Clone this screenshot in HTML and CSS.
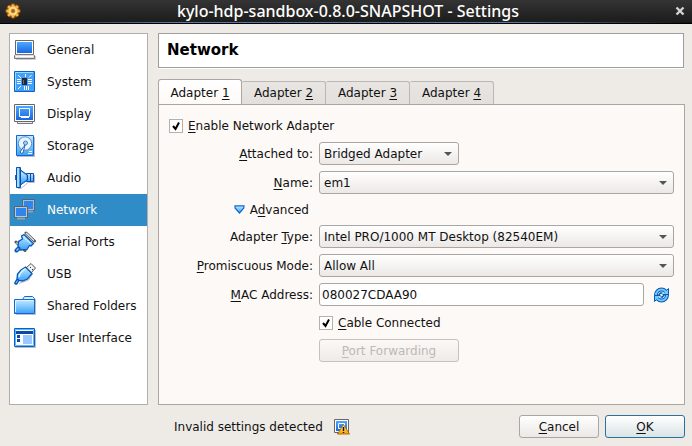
FILE: index.html
```html
<!DOCTYPE html>
<html lang="en">
<head>
<meta charset="utf-8">
<title>kylo-hdp-sandbox-0.8.0-SNAPSHOT - Settings</title>
<link rel="stylesheet" href="styles.css">
</head>
<body>
<svg class="defs" aria-hidden="true">
  <defs>
    <linearGradient id="blue" x1="0" y1="0" x2="0" y2="1"><stop offset="0" stop-color="#4aa9ff"/><stop offset="1" stop-color="#1a66e0"/></linearGradient>
    <linearGradient id="sky" x1="0" y1="0" x2="0" y2="1"><stop offset="0" stop-color="#c4ebff"/><stop offset="1" stop-color="#3ba2fb"/></linearGradient>
    <linearGradient id="gold" x1="0" y1="0" x2="0" y2="1"><stop offset="0" stop-color="#fff0a0"/><stop offset="1" stop-color="#f0a000"/></linearGradient>
  </defs>
</svg>
<header class="titlebar">
  <svg class="gear" width="16" height="16" viewBox="0 0 16 16" aria-hidden="true">
    <path d="M6.500 1h3l.5 2 2-1.200 2 2L12.800 6l2.200.5v3l-2.200.5 1.200 2-2 2-2-1.200-.5 2.200h-3L6 12.800 4 14l-2-2 1.200-2L1 9.500v-3L3.200 6 2 4l2-2 2 1.200z" fill="#f5b84a" stroke="#a35d08"/>
    <circle cx="8" cy="8" r="4" fill="#ffdf9a"/>
    <circle cx="8" cy="8" r="2" fill="#8c6222" stroke="#d88a18"/>
  </svg>
  <h1>kylo-hdp-sandbox-0.8.0-SNAPSHOT - Settings</h1>
  <button class="close" type="button" aria-label="Close">
    <svg width="10" height="10" viewBox="0 0 10 10"><path d="M1.500 1.500l7 7M8.500 1.500l-7 7" stroke="#d4d4d4" stroke-width="2.400"/></svg>
  </button>
</header>
<div class="content">
  <nav class="sidebar">
    <a href="#general"><svg viewBox="0 0 22 22" aria-hidden="true"><path d="M2 20.500h19.500V17" fill="none" stroke="#ccc"/><path d="M1.500 1.500h18v14h-18z" fill="#fff" stroke="#666"/><path d="M3 3h15v11H3z" fill="url(#blue)"/><path d="M1.500 15.500h18l1 1v3H.5v-3z" fill="#ddd" stroke="#777"/><path d="M2 17.500h2M5 17.500h14" stroke="#fff"/></svg>General</a>
    <a href="#system"><svg viewBox="0 0 22 22" aria-hidden="true"><path d="M.5.5h20v20H.5z" fill="#43a0f8" stroke="#0b62c4"/><path d="M1.500 19V1.500H19" fill="none" stroke="#9bddff"/><path d="M11.500 3v3M15 6.500L17.500 4M14 8.500h4M14 10.500h4M14 12.500h4M3 8.500h4M3 10.500h4M3 12.500h4M4 18l3-3M10.500 15v4M12.500 15v4M14.500 15v4M4 4l3 3" stroke="#fff"/><path d="M8 7h5v7H8z" fill="#252a35"/><path d="M9 9h1v4H9z" fill="#667"/></svg>System</a>
    <a href="#display"><svg viewBox="0 0 22 22" aria-hidden="true"><path d="M3.500 18.500h15v2h-15z" fill="#eee" stroke="#777"/><path d="M.5 1.500h20v17H.5z" fill="#fff" stroke="#666"/><path d="M2 3h17v14H2z" fill="url(#blue)"/><path d="M5.500 5.500h10v8h-10z" fill="none" stroke="#fff"/><path d="M7 14.500h8" stroke="#fff"/></svg>Display</a>
    <a href="#storage"><svg viewBox="0 0 22 22" aria-hidden="true"><path d="M3 21.500h17.500V2" fill="none" stroke="#bbc"/><path d="M2.500.5h17v20h-17z" fill="url(#sky)" stroke="#1268cf"/><circle cx="11" cy="8.500" r="6.700" fill="#eaf6ff" stroke="#5a8fcb"/><circle cx="11.500" cy="8" r="2" fill="#9ad0ff" stroke="#447ebd"/><path d="M11 10l-5 7q1 2 3 1z" fill="#fff" stroke="#2867aa"/><path d="M14 18.500h4M15 16.500h3" stroke="#fff"/></svg>Storage</a>
    <a href="#audio"><svg viewBox="0 0 22 22" aria-hidden="true"><path d="M4 21.500h3l7-6h6.500V8" fill="none" stroke="#bbc"/><path d="M12.500 6.500h7v8h-7z" fill="url(#sky)" stroke="#0b4ea8"/><path d="M16.500 7v7" stroke="#0b4ea8"/><path d="M2.500.5h4V3l7 5v5l-7 5v2.500h-4z" fill="#3a93ee" stroke="#0b4ea8"/><path d="M3 1h2v19H3z" fill="#a8dcff"/><path d="M7 4.500l5.500 4v4l-5.500 4z" fill="url(#sky)"/><path d="M6.500 2v17" stroke="#0b4ea8"/><path d="M1.500 8v5" stroke="#1268cf"/></svg>Audio</a>
    <a href="#network" class="selected" aria-current="page"><svg viewBox="0 0 22 22" aria-hidden="true"><path d="M8.500.5h12v11h-12z" fill="#a8bcd0" stroke="#50657a"/><path d="M10 2h9v8h-9z" fill="#2f86ea"/><path d="M12 12.500h7" stroke="#91a2b1" stroke-width="2"/><path d="M.5 7.500h13v11H.5z" fill="#b8c8d8" stroke="#50657a"/><path d="M2 9h10v8H2z" fill="#2f86ea"/><path d="M3 19.500h8" stroke="#91a2b1" stroke-width="2"/></svg>Network</a>
    <a href="#serial"><svg viewBox="0 0 22 22" aria-hidden="true"><path d="M12 2L20.500 10M2 11L11 19.500" stroke="#555" stroke-width="3" stroke-linecap="round"/><path d="M12 2L20 9.500M2.500 11.500l8 7.500" stroke="#e8e8e8" stroke-width="1.300"/><path d="M7.500 5L10 3.500l9.500 9L17 15l-1.500-.5-2.500 4-7 .5-2-2 .5-6.500L8.500 8z" fill="url(#sky)" stroke="#0b57b5" stroke-width="1.300"/><path d="M4.500 17.500l-2 2" stroke="#0b57b5" stroke-width="4" stroke-linecap="round"/><path d="M4.500 17.500l-2 2" stroke="#8bd0ff" stroke-width="1.500"/><path d="M9.500 6l7 6.500" stroke="#e1f6ff"/></svg>Serial Ports</a>
    <a href="#usb"><svg viewBox="0 0 22 22" aria-hidden="true"><path d="M12 5L17 .5l4.500 4.500L17 10z" fill="#f1f1f1" stroke="#555"/><path d="M16 4h1v1h-1zM18 6h1v1h-1z" fill="#333"/><path d="M5 20.500l9.500-3.500 4-6" fill="none" stroke="#bbc"/><path d="M11.500 4l6.500 6.500-4.500 5.500-5 2-4-.5-1.500-1.500.5-5L7 7z" fill="url(#sky)" stroke="#0b57b5" stroke-width="1.300"/><path d="M3.500 17.500L2 20" stroke="#0b57b5" stroke-width="3.500" stroke-linecap="round"/><path d="M3.500 17.500L2 20" stroke="#8bd0ff"/><path d="M5 14q1-5 6-8" fill="none" stroke="#dbf4ff" stroke-width="1.500"/></svg>USB</a>
    <a href="#folders"><svg viewBox="0 0 22 22" aria-hidden="true"><path d="M2 19.500h19.500V4" fill="none" stroke="#bbc"/><path d="M8.500 4.500l2-3h8l2 2v3h-12z" fill="#d9f1ff" stroke="#1268cf"/><path d="M.5 4.500h20v14H.5z" fill="url(#sky)" stroke="#1268cf"/><path d="M1.500 17V5.500H19" fill="none" stroke="#ddf5ff"/></svg>Shared Folders</a>
    <a href="#interface"><svg viewBox="0 0 22 22" aria-hidden="true"><path d="M1 20.500h20.500V3" fill="none" stroke="#bbc"/><path d="M.5 1.500h20v18H.5z" fill="#fff" stroke="#0b62c4"/><path d="M1.500 2.500h18v16h-18z" fill="#fff" stroke="#58b8ff"/><path d="M2 4h17v3H2zM3 8h3v3H3zM3 12h3v3H3z" fill="#0b49a8"/><path d="M9 8h9v9H9z" fill="#9cc8ff"/></svg>User Interface</a>
  </nav>
  <main>
    <h2>Network</h2>
    <div class="tabs" role="tablist">
      <button type="button" role="tab" aria-selected="true">Adapter <u>1</u></button>
      <button type="button" role="tab" aria-selected="false">Adapter <u>2</u></button>
      <button type="button" role="tab" aria-selected="false">Adapter <u>3</u></button>
      <button type="button" role="tab" aria-selected="false">Adapter <u>4</u></button>
    </div>
    <form class="panel" id="adapter">
      <label class="check"><input type="checkbox" checked><svg viewBox="0 0 14 14" aria-hidden="true"><path d="M4 7l2.500 3L10 3.500" fill="none" stroke="#000" stroke-width="2"/></svg><span><u>E</u>nable Network Adapter</span></label>
      <div class="fields">
        <label for="attached"><u>A</u>ttached to:</label>
        <div class="select short"><select id="attached"><option>Bridged Adapter</option></select></div>
        <label for="name"><u>N</u>ame:</label>
        <div class="select"><select id="name"><option>em1</option></select></div>
        <button class="advanced" type="button" aria-expanded="true"><svg width="11" height="9" viewBox="0 0 11 9" aria-hidden="true"><path d="M1 .8h9L9.800 3 5.500 8 1 3z" fill="url(#sky)" stroke="#1268cf" stroke-width="1.200"/></svg><span>A<u>d</u>vanced</span></button>
        <label for="type">Adapter <u>T</u>ype:</label>
        <div class="select"><select id="type"><option>Intel PRO/1000 MT Desktop (82540EM)</option></select></div>
        <label for="mode"><u>P</u>romiscuous Mode:</label>
        <div class="select"><select id="mode"><option>Allow All</option></select></div>
        <label for="mac"><u>M</u>AC Address:</label>
        <div class="mac"><input id="mac" type="text" value="080027CDAA90"><button type="button" aria-label="Generate new MAC address"><svg width="16" height="16" viewBox="0 0 16 16"><circle cx="7.500" cy="8" r="5.500" fill="#d9f3ff" stroke="#0b57b5" stroke-width="4"/><circle cx="7.500" cy="8" r="5.500" fill="none" stroke="#6fcbff" stroke-width="2"/><path d="M8.500 7.500h6v-6l-2 2M6.500 8.500h-6v6l2-2" fill="#6fcbff" stroke="#0b57b5"/><path d="M4.500 8.500l2-2.500h2M10.500 7.500l-2 2.500h-2" fill="none" stroke="#0b57b5" stroke-width="1.300"/></svg></button></div>
        <label class="check cable"><input type="checkbox" checked><svg viewBox="0 0 14 14" aria-hidden="true"><path d="M4 7l2.500 3L10 3.500" fill="none" stroke="#000" stroke-width="2"/></svg><span><u>C</u>able Connected</span></label>
        <button class="button forwarding" type="button" disabled><u>P</u>ort Forwarding</button>
      </div>
    </form>
  </main>
</div>
<footer>
  <p>Invalid settings detected</p>
  <svg class="warning" width="16" height="16" viewBox="0 0 16 16" role="img" aria-label="Warning"><path d="M.5.5h14v13H.5z" fill="#fff" stroke="#666"/><path d="M2 2h11v10H2z" fill="url(#blue)"/><path d="M4.500 4.500h6v5h-6z" fill="none" stroke="#fff"/><path d="M3 14.500h5" stroke="#666"/><path d="M9.500 5.500l6 9.500h-12z" fill="url(#gold)" stroke="#b86a00"/><path d="M9.500 8v4M9.500 13v1" stroke="#111" stroke-width="1.400"/></svg>
  <button class="button" type="button"><u>C</u>ancel</button>
  <button class="button default" type="button"><u>O</u>K</button>
</footer>
</body>
</html>
```
FILE: styles.css
```css
* {
  box-sizing: border-box;
}

body {
  margin: 0;
  min-height: 100vh;
  display: flex;
  flex-direction: column;
  background: #eeebe7;
  color: #111;
  font: 12px/16px "DejaVu Sans", sans-serif;
}

button,
input,
select {
  font: inherit;
  color: inherit;
}

u {
  text-underline-offset: 2px;
  text-decoration-thickness: 1px;
  text-decoration-skip-ink: none;
}

.defs {
  position: absolute;
  width: 0;
  height: 0;
}

.titlebar {
  display: flex;
  align-items: center;
  height: 24px;
  padding: 0 7px 2px 5px;
  background: linear-gradient(90deg, #171b22, #5878a2 25%, #5878a2 75%, #111) 0 22px / 100% 1px no-repeat,
    linear-gradient(#343434, #1c1c1c 22px, #000 22px);
}

.titlebar h1 {
  flex: 1;
  margin: 0;
  color: #fff;
  font: 500 16px/20px "Noto Sans", sans-serif;
  text-align: center;
}

.close {
  display: flex;
  padding: 0;
  border: 0;
  background: none;
}

.content {
  flex: 1;
  display: flex;
  gap: 10px;
  padding: 9px 7px 0 9px;
}

.sidebar {
  flex: 0 0 139px;
  border: 1px solid #b1adaa;
  background: #fff;
}

.sidebar a {
  display: flex;
  align-items: center;
  gap: 11px;
  height: 32px;
  padding-left: 4px;
  color: #111;
  text-decoration: none;
}

.sidebar svg {
  width: 22px;
  height: 22px;
}

.sidebar .selected {
  background: #308cc6;
  color: #fff;
}

main {
  flex: 1;
  display: flex;
  flex-direction: column;
  min-width: 0;
}

h2 {
  margin: 0 1px 11px 0;
  padding: 0 8px;
  border: 1px solid #a09d9a;
  background: #fff;
  box-shadow: 0 1px #fff;
  color: #000;
  font-size: 15px;
  line-height: 33px;
}

.tabs {
  display: flex;
  align-items: flex-end;
  height: 25px;
}

.tabs button {
  width: 84px;
  height: 24px;
  padding: 0;
  border: 1px solid #bbb7b4;
  border-left: 0;
  border-bottom-color: #a9a6a3;
  border-radius: 2px 3px 0 0;
  margin-bottom: -1px;
  background: linear-gradient(#e8e5e2, #e3e0dc);
}

.tabs [aria-selected="true"] {
  height: 26px;
  border: 1px solid #a9a6a3;
  border-bottom: 0;
  border-radius: 3px 3px 0 0;
  background: linear-gradient(#fff, #fdf9f6);
}

.panel {
  flex: 1;
  padding: 12px 10px;
  border: 1px solid #a9a6a3;
  background: #fdf9f6;
}

.check {
  display: grid;
  grid-template-columns: 14px auto;
  justify-content: start;
  align-items: center;
  gap: 5px;
  height: 17px;
}

.check input {
  grid-area: 1 / 1;
  width: 14px;
  height: 14px;
  margin: 0;
  appearance: none;
  border: 1px solid #b5b1ae;
  background: #fff;
}

.check svg {
  grid-area: 1 / 1;
  width: 14px;
  height: 14px;
  visibility: hidden;
}

.check input:checked + svg {
  visibility: visible;
}

.fields {
  display: grid;
  grid-template-columns: 144px 1fr;
  grid-template-rows: 23px 23px 19px 23px 23px 23px 21px 23px;
  gap: 6px;
  align-items: center;
  margin-top: 8px;
}

.fields > label {
  grid-column: 1;
  text-align: right;
}

.select {
  display: flex;
  align-items: center;
}

.select::after {
  content: "";
  width: 0;
  margin-left: -15px;
  margin-right: 7px;
  border: 4px solid transparent;
  border-top-color: #555;
  border-bottom: 0;
  pointer-events: none;
}

.select select,
.button,
.mac input {
  height: 23px;
  border: 1px solid #aaa6a3;
  border-radius: 3px;
  background: linear-gradient(#fff, #ebe8e5);
}

.select select {
  flex: 1;
  min-width: 0;
  padding: 0 20px 0 4px;
  appearance: none;
}

.short {
  width: 140px;
}

.advanced {
  grid-column: 1;
  justify-self: end;
  display: flex;
  align-items: center;
  gap: 5px;
  padding: 0 4px;
  border: 0;
  background: none;
}

.mac {
  display: flex;
  align-items: center;
  gap: 10px;
}

.mac input {
  flex: 1;
  min-width: 0;
  padding: 0 2px;
  background: #fff;
}

.mac button {
  display: flex;
  padding: 0 4px 0 0;
  border: 0;
  background: none;
}

.fields .cable,
.forwarding {
  grid-column: 2;
  text-align: left;
}

.button {
  width: 80px;
  padding: 0;
}

.forwarding {
  width: 140px;
  text-align: center;
}

.button:disabled {
  border-color: #c5c1be;
  background: linear-gradient(#fbf8f5, #efebe8);
  color: #bdb9b6;
}

.default {
  border-color: #2b719e;
  background: linear-gradient(#fff, #dae3e6);
}

footer {
  display: flex;
  align-items: center;
  gap: 6px;
  padding: 10px 7px 8px 174px;
}

footer p {
  margin: 0;
}

.warning {
  margin: 0 auto 0 5px;
}
```
